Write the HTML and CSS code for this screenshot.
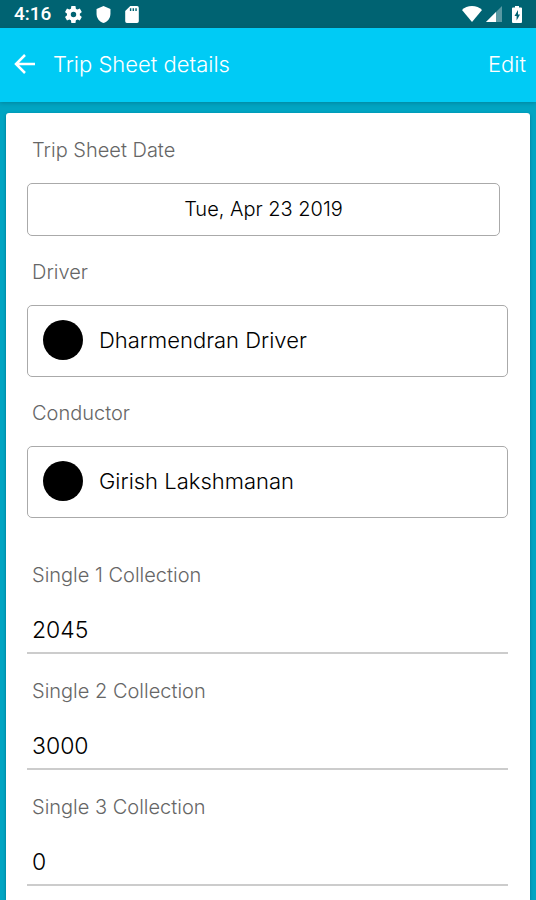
FILE: index.html
```html
<!DOCTYPE html>
<html lang="en">
<head>
    <meta charset="UTF-8">
    <meta name="viewport" content="width=device-width, initial-scale=1.0">
    <title>Trip Sheet details</title>
    <link rel="stylesheet" href="styles.css">
</head>
<body>
    <div class="status-bar">
        <span class="clock">4:16</span>
        <svg class="status-icon gear" viewBox="2 2 20 20"><path fill-rule="evenodd" d="M19.4 13c0-.3.1-.6.1-1s0-.7-.1-1l2.1-1.600c.2-.2.2-.4.1-.6l-2-3.500c-.1-.2-.4-.3-.6-.2l-2.500 1c-.5-.4-1.100-.7-1.700-1l-.4-2.600c0-.3-.2-.5-.5-.5h-4c-.2 0-.5.2-.5.4l-.4 2.700c-.6.2-1.100.6-1.700 1l-2.500-1c-.2-.1-.5 0-.6.2l-2 3.500c-.1.2-.1.500.1.600l2.100 1.600c0 .3-.1.700-.1 1s0 .7.100 1l-2.100 1.600c-.2.200-.2.400-.1.600l2 3.500c.1.200.4.300.6.200l2.500-1c.5.400 1.100.7 1.700 1l.4 2.700c0 .200.200.400.5.400h4c.200 0 .500-.200.500-.400l.4-2.700c.6-.200 1.100-.600 1.700-1l2.500 1c.200.100.500 0 .600-.200l2-3.500c.100-.200.100-.500-.100-.600zM12 15.200a3.200 3.200 0 1 1 0-6.400 3.200 3.200 0 0 1 0 6.400z"/></svg>
        <svg class="status-icon shield" viewBox="3 1 18 22"><path d="M12 1L3 5v6c0 5.600 3.800 10.700 9 12 5.200-1.300 9-6.400 9-12V5z"/></svg>
        <svg class="status-icon card-icon" viewBox="4 2 16 20"><path fill-rule="evenodd" d="M18 2h-8L4 8v12a2 2 0 0 0 2 2h12a2 2 0 0 0 2-2V4a2 2 0 0 0-2-2zM9.500 4.500h1.700v3.500H9.500zM12.700 4.500h1.700v3.500h-1.700zM15.900 4.500h1.700v3.500h-1.700z"/></svg>
        <svg class="status-icon wifi" viewBox="0 0 20 16"><path d="M10 16L0 4C2.500 1.400 6 0 10 0s7.500 1.400 10 4z"/></svg>
        <svg class="status-icon signal" viewBox="0 0 16 16"><path opacity=".35" d="M0 16L16 0v16z"/><path d="M0 16L10 6v10z"/></svg>
        <svg class="status-icon battery" viewBox="0 0 10 17"><path fill-rule="evenodd" d="M3 0h4v1.500h2a1 1 0 0 1 1 1V16a1 1 0 0 1-1 1H1a1 1 0 0 1-1-1V2.500a1 1 0 0 1 1-1h2zM6 4L2.500 10H4.600v4.500L8 8.500H6z"/></svg>
    </div>
    <header class="toolbar">
        <button type="button" class="back" aria-label="Back">
            <svg viewBox="0 0 22 22"><path d="M21 11H2M11 2L2 11l9 9"/></svg>
        </button>
        <h1>Trip Sheet details</h1>
        <button type="button" class="edit">Edit</button>
    </header>
    <main class="page">
        <form class="card">
            <div class="field">
                <label for="date">Trip Sheet Date</label>
                <button type="button" class="picker date" id="date">Tue, Apr 23 2019</button>
            </div>
            <div class="field">
                <label for="driver">Driver</label>
                <button type="button" class="picker person" id="driver"><span class="avatar"></span>Dharmendran Driver</button>
            </div>
            <div class="field">
                <label for="conductor">Conductor</label>
                <button type="button" class="picker person" id="conductor"><span class="avatar"></span>Girish Lakshmanan</button>
            </div>
            <div class="collections">
                <div class="collection">
                    <label for="single1">Single 1 Collection</label>
                    <input type="text" inputmode="numeric" id="single1" value="2045">
                </div>
                <div class="collection">
                    <label for="single2">Single 2 Collection</label>
                    <input type="text" inputmode="numeric" id="single2" value="3000">
                </div>
                <div class="collection">
                    <label for="single3">Single 3 Collection</label>
                    <input type="text" inputmode="numeric" id="single3" value="0">
                </div>
            </div>
        </form>
    </main>
</body>
</html>
```
FILE: styles.css
```css
* {
    box-sizing: border-box;
}
body {
    margin: 0;
    min-height: 100vh;
    display: flex;
    flex-direction: column;
    background-color: #00a5c3;
    font-family: Inter, "Liberation Sans", sans-serif;
    font-weight: 300;
}
button, input {
    font: inherit;
    color: inherit;
    background: none;
    border: none;
    border-radius: 0;
    padding: 0;
    margin: 0;
}
button {
    cursor: pointer;
}

/* Status bar */
.status-bar {
    display: flex;
    align-items: center;
    height: 28px;
    padding: 0 14px;
    background-color: #006372;
    color: #fff;
}
.clock {
    font-family: Roboto, sans-serif;
    font-size: 19px;
    font-weight: 500;
    line-height: 28px;
}
.status-icon {
    fill: #fff;
    height: 17px;
}
.gear {
    width: 17px;
    margin-left: 14px;
}
.shield {
    width: 15px;
    margin-left: 14px;
}
.card-icon {
    width: 14px;
    margin-left: 14px;
}
.wifi {
    width: 20px;
    height: 16px;
    margin-left: auto;
}
.signal {
    width: 16px;
    height: 16px;
    margin-left: 4px;
}
.battery {
    width: 10px;
    margin-left: 10px;
}

/* Toolbar */
.toolbar {
    display: flex;
    align-items: center;
    height: 74px;
    padding: 0 10px 2px 14px;
    background-color: #00cbf5;
    box-shadow: 0 1px 4px rgba(0, 80, 100, 0.4);
    color: #fff;
    font-size: 22px;
}
.back {
    display: flex;
}
.back svg {
    width: 22px;
    height: 22px;
    fill: none;
    stroke: #fff;
    stroke-width: 2.500;
}
.toolbar h1 {
    flex: 1;
    margin: 0 0 0 17px;
    font-size: 22px;
    font-weight: 300;
}

/* Form card */
.page {
    flex: 1;
    display: flex;
    flex-direction: column;
    padding: 11px 6px 0;
}
.card {
    flex: 1;
    padding: 25px 22px 14px 21px;
    background-color: #fff;
    border-radius: 3px 3px 0 0;
    box-shadow: 0 1px 3px rgba(0, 60, 80, 0.5);
}
.field {
    display: flex;
    flex-direction: column;
    gap: 21px;
    margin-bottom: 24px;
}
label {
    padding-left: 5px;
    font-size: 20px;
    line-height: 24px;
    color: #666;
}
.picker {
    padding-bottom: 2px;
    border: 1px solid #aaa;
    border-radius: 5px;
    color: #000;
}
.date {
    height: 53px;
    margin-right: 8px;
    font-size: 20px;
}
.person {
    display: flex;
    align-items: center;
    gap: 16px;
    height: 72px;
    padding: 0 15px 2px;
    font-size: 22px;
}
.avatar {
    width: 40px;
    height: 40px;
    border-radius: 50%;
    background-color: #000;
}
.collections {
    display: flex;
    flex-direction: column;
    gap: 25px;
    margin-top: 45px;
}
.collection {
    display: flex;
    flex-direction: column;
}
.collection input {
    width: 100%;
    height: 67px;
    padding: 20px 5px 0;
    border-bottom: 2px solid #ccc;
    font-size: 23px;
    color: #000;
}
```
